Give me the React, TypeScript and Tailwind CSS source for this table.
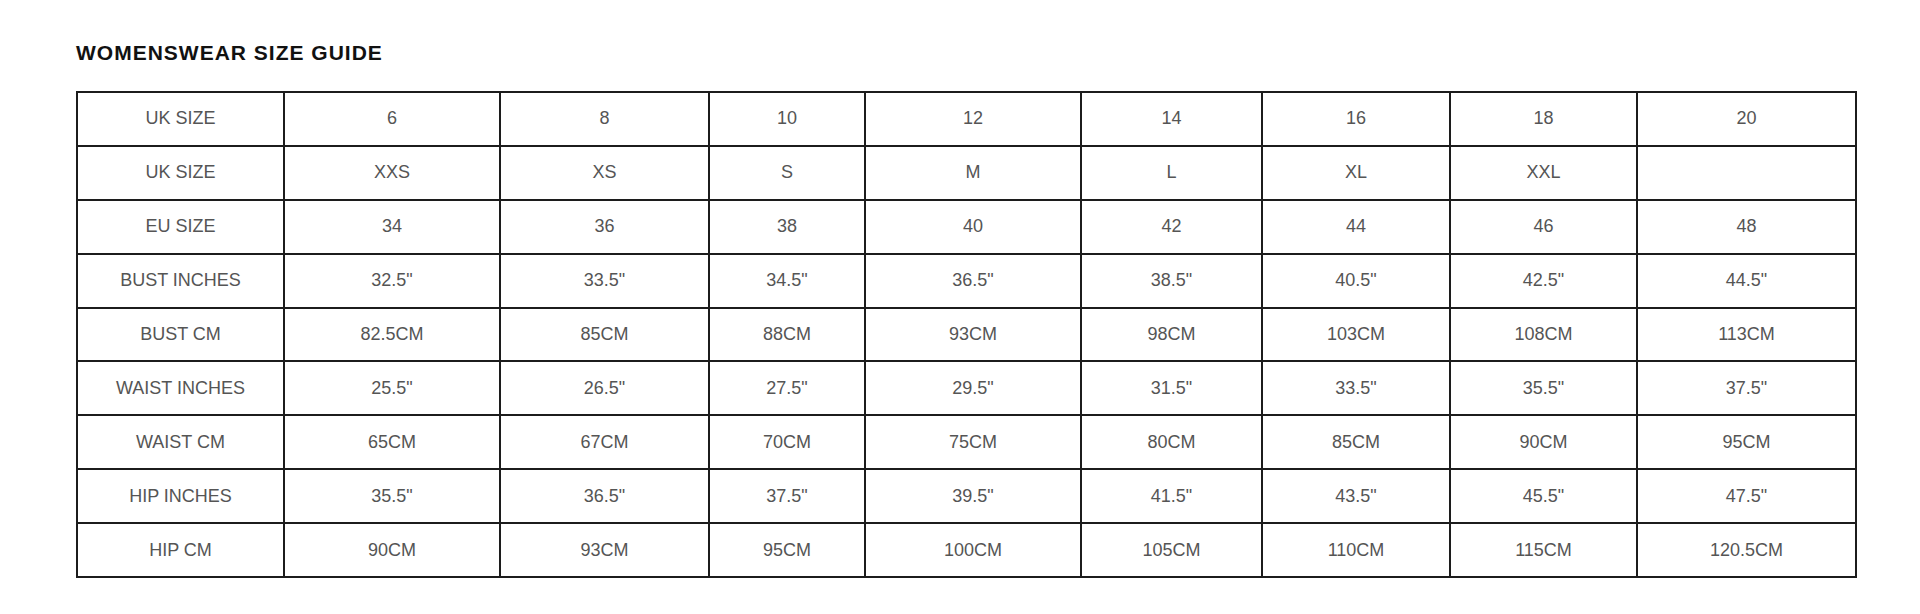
const columnWidths = [207, 216, 209, 156, 216, 181, 188, 187, 219];

const rows: { label: string; values: string[] }[] = [
  { label: "UK SIZE", values: ["6", "8", "10", "12", "14", "16", "18", "20"] },
  { label: "UK SIZE", values: ["XXS", "XS", "S", "M", "L", "XL", "XXL", ""] },
  { label: "EU SIZE", values: ["34", "36", "38", "40", "42", "44", "46", "48"] },
  {
    label: "BUST INCHES",
    values: ['32.5"', '33.5"', '34.5"', '36.5"', '38.5"', '40.5"', '42.5"', '44.5"'],
  },
  {
    label: "BUST CM",
    values: ["82.5CM", "85CM", "88CM", "93CM", "98CM", "103CM", "108CM", "113CM"],
  },
  {
    label: "WAIST INCHES",
    values: ['25.5"', '26.5"', '27.5"', '29.5"', '31.5"', '33.5"', '35.5"', '37.5"'],
  },
  {
    label: "WAIST CM",
    values: ["65CM", "67CM", "70CM", "75CM", "80CM", "85CM", "90CM", "95CM"],
  },
  {
    label: "HIP INCHES",
    values: ['35.5"', '36.5"', '37.5"', '39.5"', '41.5"', '43.5"', '45.5"', '47.5"'],
  },
  {
    label: "HIP CM",
    values: ["90CM", "93CM", "95CM", "100CM", "105CM", "110CM", "115CM", "120.5CM"],
  },
];

export default function App() {
  return (
    <div className="w-[1920px] h-[614px] bg-white pl-[76px] pt-[42px] font-['Liberation_Sans',Arial,sans-serif]">
      <h2 className="text-[21px] leading-none font-bold tracking-[1px] text-[#111]">
        WOMENSWEAR SIZE GUIDE
      </h2>

      {/* size table */}
      <table className="mt-[28px] table-fixed border-collapse w-[1781px]">
        <colgroup>
          {columnWidths.map((w, i) => (
            <col key={i} style={{ width: w }} />
          ))}
        </colgroup>
        <tbody>
          {rows.map((row, r) => (
            <tr key={r} className="h-[53.9px]">
              <td className="border-2 border-[#1c1c1c] text-center text-[18px] text-[#555] p-0">
                {row.label}
              </td>
              {row.values.map((v, i) => (
                <td
                  key={i}
                  className="border-2 border-[#1c1c1c] text-center text-[18px] text-[#555] p-0"
                >
                  {v}
                </td>
              ))}
            </tr>
          ))}
        </tbody>
      </table>
    </div>
  );
}
